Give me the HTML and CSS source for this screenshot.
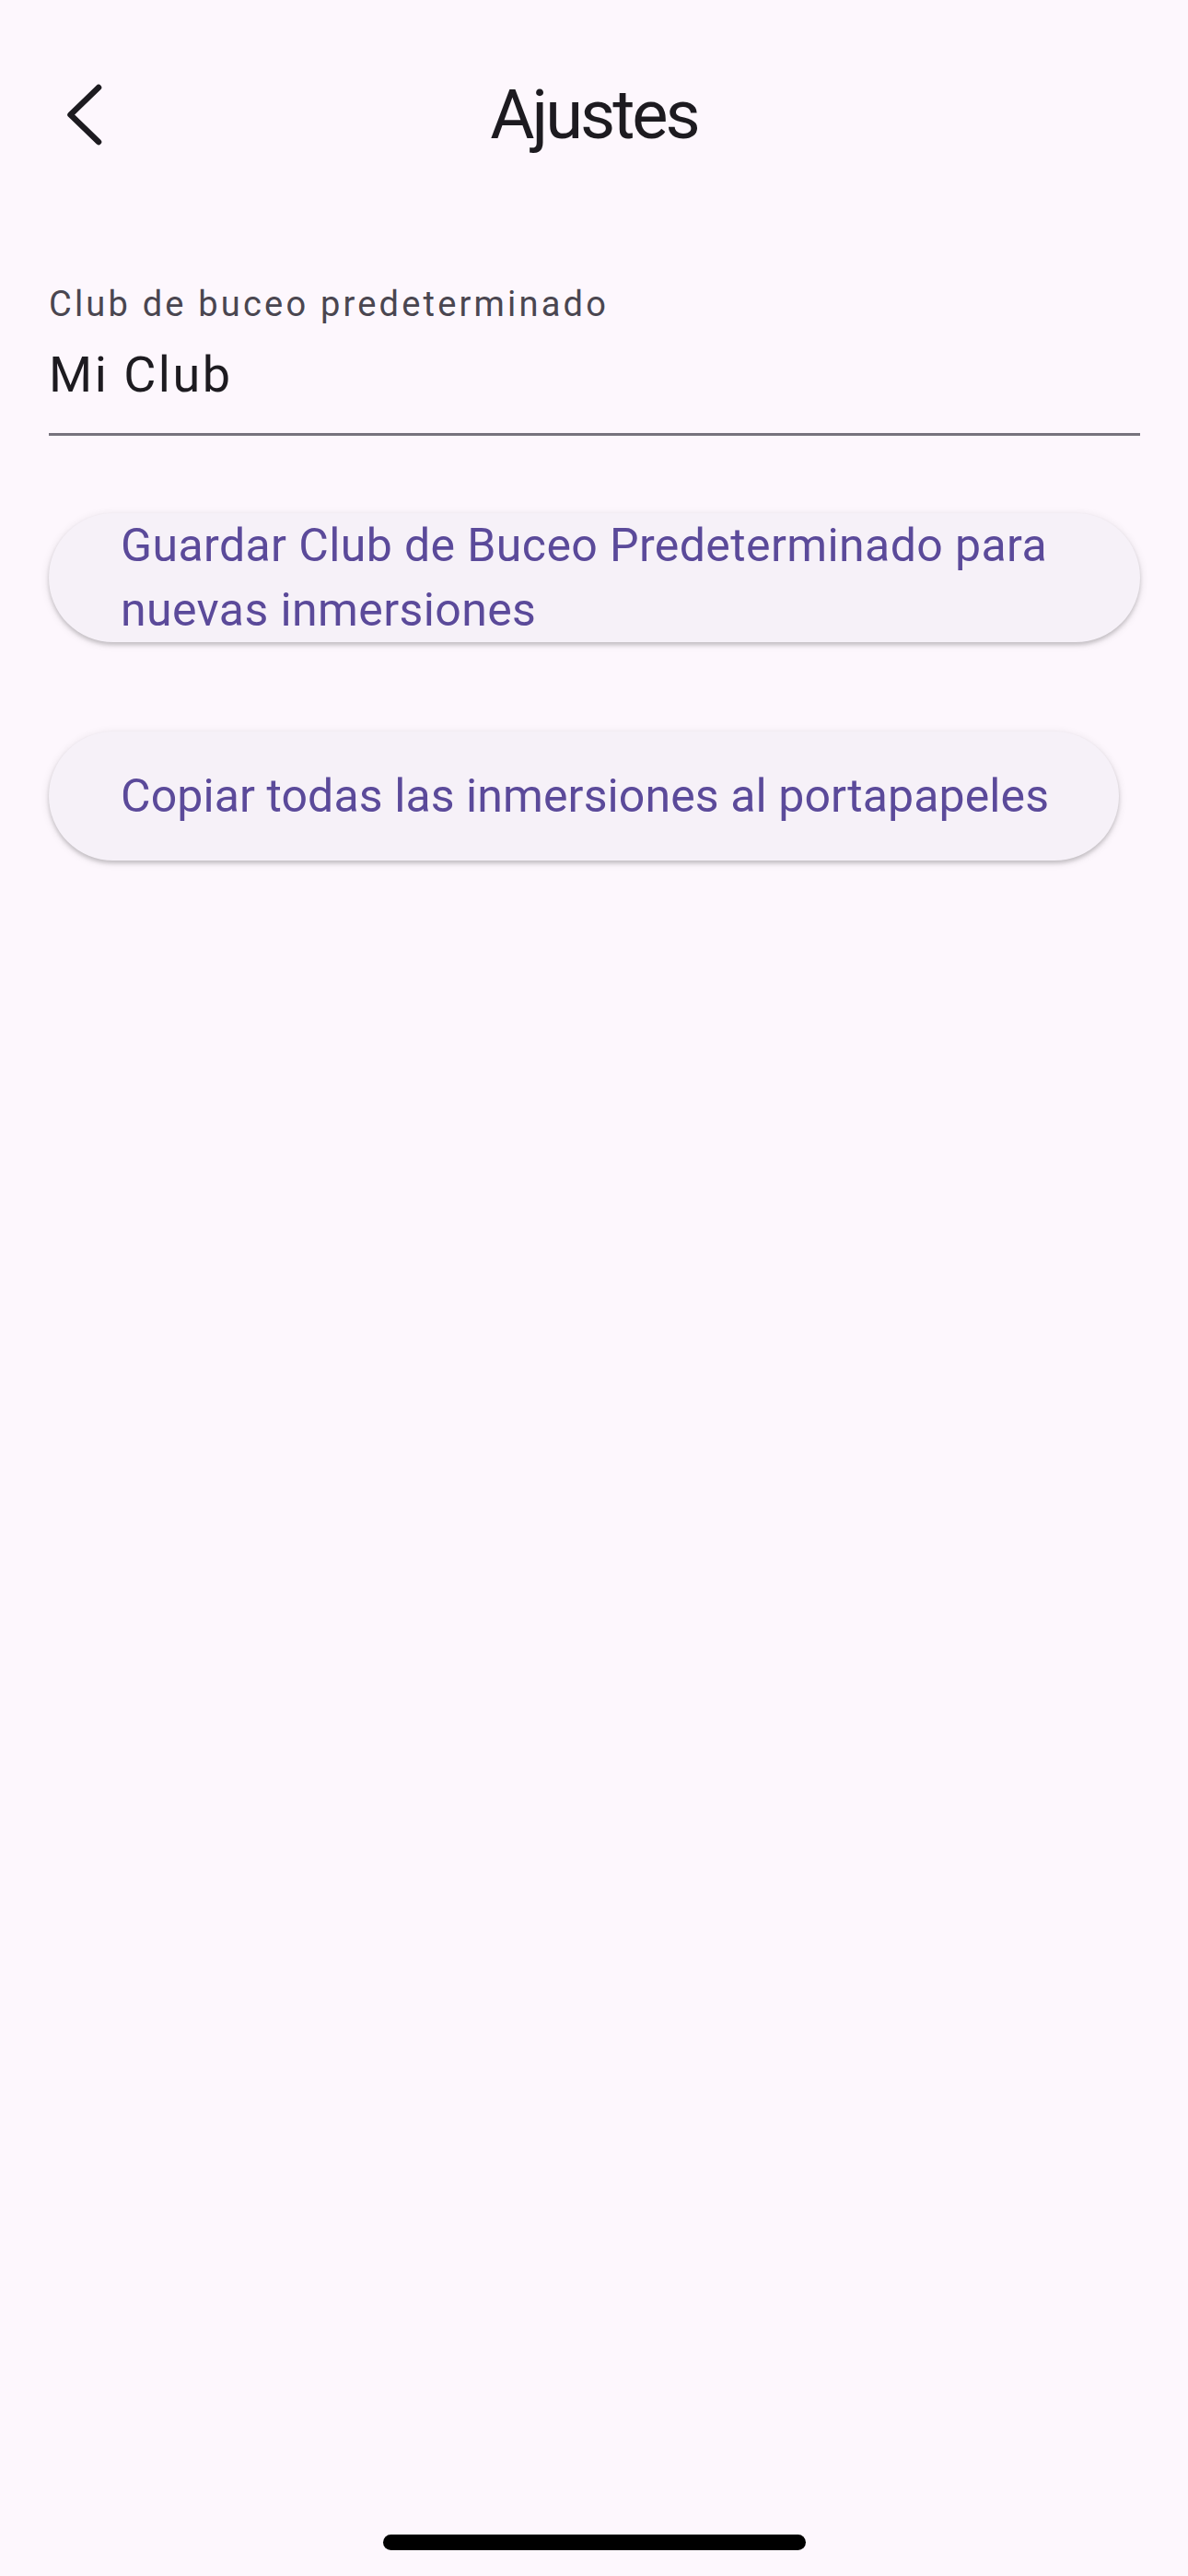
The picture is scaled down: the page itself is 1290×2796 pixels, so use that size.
FILE: index.html
```
<!DOCTYPE html>
<html lang="es">
<head>
    <meta charset="UTF-8">
    <meta name="viewport" content="width=device-width, initial-scale=1.0">
    <title>Ajustes</title>
    <link rel="stylesheet" href="styles.css">
</head>
<body>
    <div class="screen">
        <!-- App bar -->
        <header class="app-bar">
            <button class="back" aria-label="Atrás">
                <svg width="72" height="72" viewBox="0 0 72 72">
                    <polyline points="51,6 20.5,35.5 51,65" fill="none" stroke="#1d1b20" stroke-width="6.5" stroke-linecap="round" stroke-linejoin="round"/>
                </svg>
            </button>
            <h1>Ajustes</h1>
        </header>

        <main class="content">
            <!-- Default dive club -->
            <div class="field">
                <label for="club">Club de buceo predeterminado</label>
                <input type="text" id="club" value="Mi Club">
            </div>

            <button class="btn btn-wide">Guardar Club de Buceo Predeterminado para nuevas inmersiones</button>
            <button class="btn btn-copy">Copiar todas las inmersiones al portapapeles</button>
        </main>

        <div class="home-bar"></div>
    </div>
</body>
</html>
```

FILE: styles.css
```
body {
    margin: 0;
    background-color: #fdf7fd;
    font-family: 'Roboto', 'Noto Sans', sans-serif;
    color: #1d1b20;
}
.screen {
    min-height: 2796px;
    display: flex;
    flex-direction: column;
}
.app-bar {
    margin-top: 41px;
    height: 168px;
    display: grid;
    grid-template-columns: 1fr auto 1fr;
    align-items: center;
}
.back {
    justify-self: start;
    margin-left: 56px;
    width: 72px;
    height: 72px;
    padding: 0;
    border: none;
    background: none;
    display: flex;
}
.app-bar h1 {
    margin: 0;
    font-size: 74px;
    font-weight: 400;
    letter-spacing: -3px;
    line-height: 168px;
    color: #1d1b20;
}
.content {
    padding: 99px 52px 0 53px;
    display: flex;
    flex-direction: column;
    align-items: flex-start;
}
.field {
    width: 100%;
    display: flex;
    flex-direction: column;
    border-bottom: 3px solid #77737d;
}
.field label {
    font-size: 38px;
    line-height: 44px;
    letter-spacing: 3.2px;
    color: #4a4650;
}
.field input {
    margin-top: 23px;
    padding: 0 0 31px;
    height: 64px;
    border: none;
    background: none;
    outline: none;
    font-family: inherit;
    font-size: 54px;
    line-height: 64px;
    letter-spacing: 2.5px;
    color: #1d1b20;
}
.btn {
    margin-top: 84px;
    min-height: 140px;
    padding: 0 77px 0 78px;
    border: none;
    border-radius: 70px;
    background-color: #f6f1f8;
    box-shadow: 0 3px 4px rgba(0, 0, 0, 0.18), 0 2px 9px 2px rgba(0, 0, 0, 0.07);
    font-family: inherit;
    font-size: 50px;
    font-weight: 400;
    line-height: 70px;
    letter-spacing: 0.4px;
    color: #5b4a9a;
    text-align: left;
    cursor: pointer;
}
.btn-wide {
    width: 100%;
}
.btn-copy {
    margin-top: 97px;
    padding-right: 76px;
    letter-spacing: 0.1px;
}
.home-bar {
    margin: auto auto 28px;
    width: 459px;
    height: 17px;
    border-radius: 9px;
    background-color: #000;
}
```
